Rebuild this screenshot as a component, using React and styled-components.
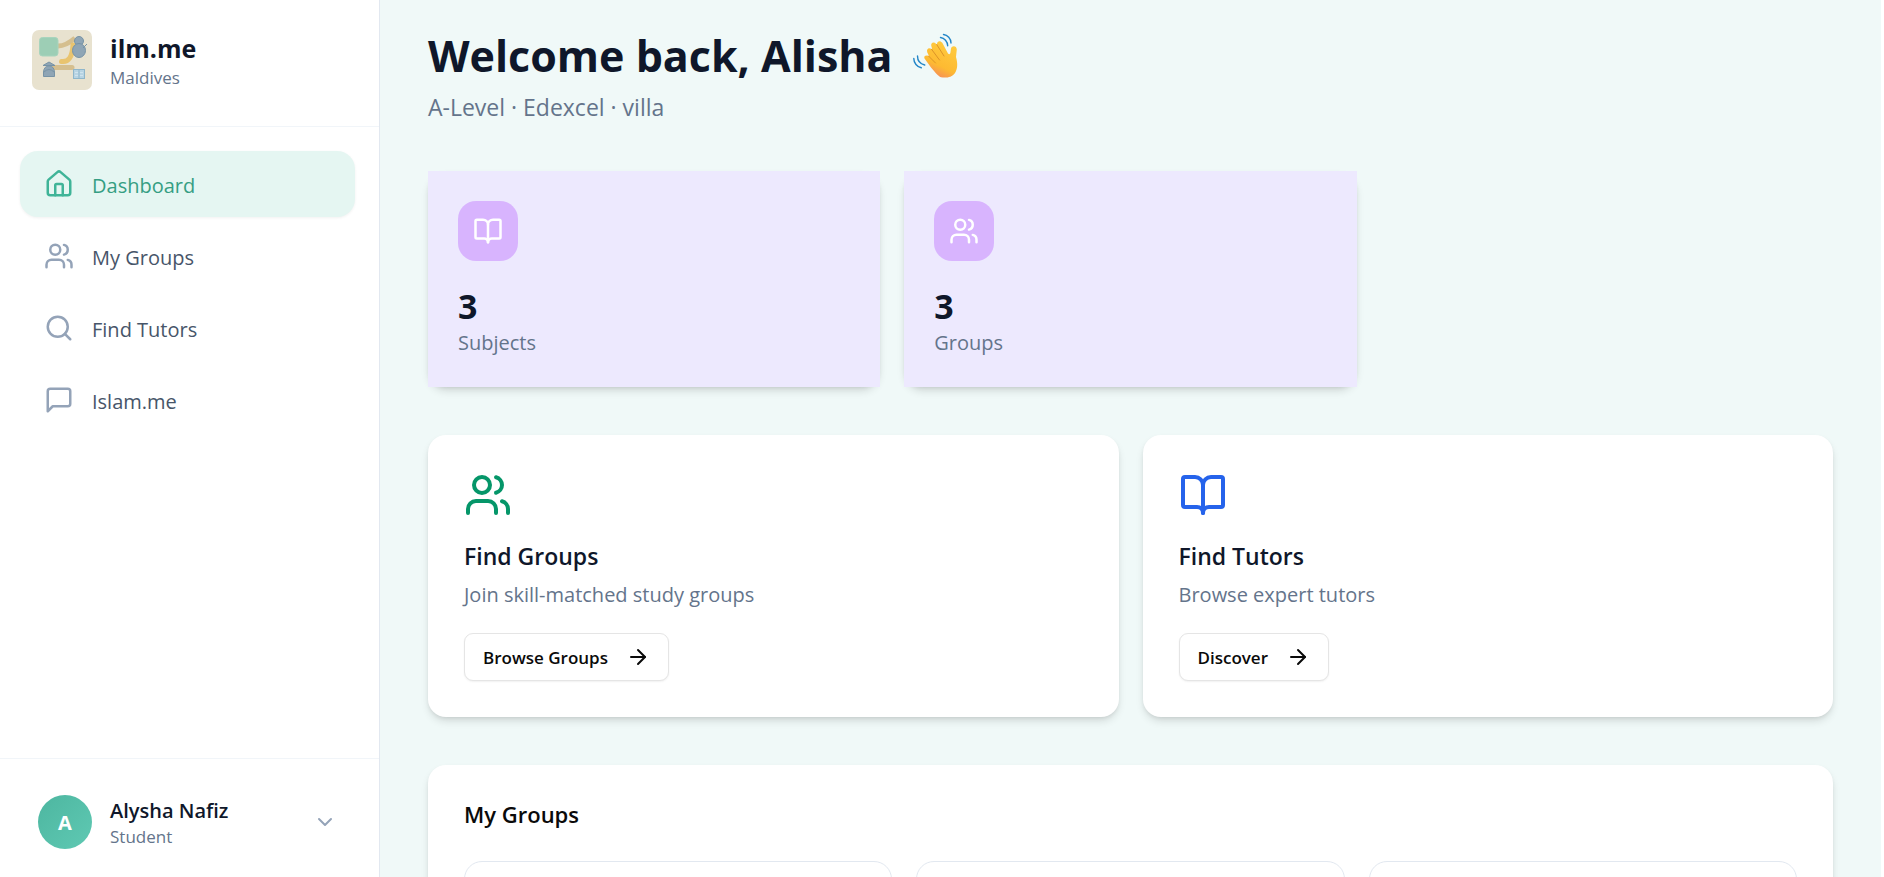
import React from "react";
import styled, { createGlobalStyle } from "styled-components";
import { House, Users, Search, BookOpen, ArrowRight, ChevronDown } from "lucide-react";

const GlobalStyle = createGlobalStyle`
  *, *::before, *::after { box-sizing: border-box; }
  body {
    margin: 0;
    background: #ffffff;
    color: #0f172a;
    font-family: "Segoe UI", "Open Sans", "Noto Sans", sans-serif;
  }
  h1, h2, h3, p { margin: 0; }
  button { font-family: inherit; cursor: pointer; }
`;

const Shell = styled.div`
  display: grid;
  grid-template-columns: 380px 1fr;
  height: 100vh;
  overflow: hidden;
`;

const Sidebar = styled.aside`
  display: flex;
  flex-direction: column;
  background: #ffffff;
  border-right: 1px solid #e2e8f0;
`;

const Brand = styled.div`
  display: flex;
  align-items: flex-start;
  gap: 18px;
  padding: 30px 32px 36px;
  border-bottom: 1px solid #f1f5f9;
`;

const Stack = styled.div`
  display: flex;
  flex-direction: column;
  flex: 1;
  text-align: left;
`;

const BrandName = styled.span`
  font-size: 25px;
  line-height: 36px;
  font-weight: 700;
`;

const Caption = styled.span`
  font-size: 17px;
  line-height: 24px;
  color: #64748b;
`;

const Nav = styled.nav`
  display: flex;
  flex-direction: column;
  flex: 1;
  gap: 6px;
  padding: 24px 24px 24px 20px;
`;

const NavLink = styled.a`
  display: flex;
  align-items: center;
  gap: 18px;
  height: 66px;
  padding: 0 24px;
  border-radius: 18px;
  font-size: 20px;
  font-weight: 500;
  text-decoration: none;
  color: ${(p) => (p.$active ? "#359e83" : "#475569")};
  background: ${(p) => (p.$active ? "#e5f6f2" : "transparent")};
  box-shadow: ${(p) => (p.$active ? "0 1px 3px rgba(0, 0, 0, 0.06)" : "none")};

  svg { color: ${(p) => (p.$active ? "#3fb498" : "#94a3b8")}; }
`;

const NavLabel = styled.span`
  padding-top: 2px;
`;

const ProfileBar = styled.div`
  border-top: 1px solid #f1f5f9;
  padding: 24px 20px 16px;
`;

const ProfileButton = styled.button`
  display: flex;
  align-items: center;
  gap: 18px;
  width: 100%;
  padding: 12px 22px 12px 18px;
  border: 0;
  background: transparent;
  color: inherit;

  svg { color: #94a3b8; }
`;

const Avatar = styled.span`
  display: flex;
  align-items: center;
  justify-content: center;
  width: 54px;
  height: 54px;
  border-radius: 50%;
  background: linear-gradient(135deg, #4db6a0, #5fc9b3);
  color: #ffffff;
  font-size: 20px;
  font-weight: 700;
`;

const ProfileName = styled.span`
  padding-top: 2px;
  font-size: 20px;
  line-height: 28px;
  font-weight: 600;
`;

const Main = styled.main`
  display: flex;
  flex-direction: column;
  gap: 48px;
  padding: 29px 48px 48px;
  border-right: 3px solid #ffffff;
  background: #f0f9f8;
  overflow: hidden;
`;

const Title = styled.h1`
  display: flex;
  align-items: center;
  gap: 20px;
  font-size: 43px;
  line-height: 54px;
  font-weight: 700;
`;

const Subtitle = styled.p`
  padding-top: 8px;
  font-size: 23px;
  line-height: 32px;
  color: #64748b;
`;

const Grid = styled.div`
  display: grid;
  grid-template-columns: repeat(${(p) => p.$columns}, 1fr);
  gap: 24px;
`;

const StatCard = styled.section`
  border-radius: 18px;
  box-shadow: 0 5px 8px -1px rgba(0, 0, 0, 0.12), 0 2px 5px -2px rgba(0, 0, 0, 0.12);
`;

const StatBody = styled.div`
  padding: 30px;
  background: #ede9fe;
`;

const StatIcon = styled.div`
  display: flex;
  align-items: center;
  justify-content: center;
  width: 60px;
  height: 60px;
  border-radius: 18px;
  background: #d8b4fe;
  color: #ffffff;
`;

const StatValue = styled.p`
  padding: 24px 0 2px;
  font-size: 34px;
  line-height: 42px;
  font-weight: 700;
`;

const Muted = styled.p`
  font-size: 20px;
  line-height: 28px;
  color: #64748b;
`;

const Card = styled.section`
  padding: 36px;
  border-radius: 18px;
  background: #ffffff;
  box-shadow: 0 5px 8px -1px rgba(0, 0, 0, 0.12), 0 2px 5px -2px rgba(0, 0, 0, 0.12);
`;

const ActionIcon = styled.div`
  display: flex;
  padding-bottom: 22px;
  color: ${(p) => p.$color};
`;

const CardTitle = styled.h2`
  padding-bottom: 10px;
  font-size: 23px;
  line-height: 30px;
  font-weight: 600;
`;

const GroupsTitle = styled.h2`
  padding-bottom: 34px;
  font-size: 22px;
  line-height: 26px;
  font-weight: 600;
  color: #0a0a0a;
`;

const OutlineButton = styled.button`
  display: inline-flex;
  align-items: center;
  gap: 18px;
  height: 48px;
  margin-top: 24px;
  padding: 0 18px;
  border: 1px solid #e5e5e5;
  border-radius: 9px;
  background: #ffffff;
  box-shadow: 0 1px 2px rgba(0, 0, 0, 0.06);
  color: #0a0a0a;
  font-size: 17px;
  font-weight: 600;
`;

const GroupCard = styled.article`
  height: 180px;
  border: 1px solid #e2e8f0;
  border-radius: 18px;
`;

const Logo = () => (
  <svg width="60" height="60" viewBox="0 0 60 60" aria-hidden="true">
    <rect width="60" height="60" rx="7" fill="#e8e2cf" />
    <path d="M26 16Q34 16 43 8" fill="none" stroke="#d5bf8f" strokeWidth="5" />
    <path d="M22 37.500H40" stroke="#d5bf8f" strokeWidth="5" strokeLinecap="round" />
    <path d="M29.500 31.500Q40 33 41 15" fill="none" stroke="#e9c46f" strokeWidth="5" strokeLinecap="round" />
    <rect x="7.500" y="7.500" width="18.500" height="18.500" rx="3" fill="#9dceb5" stroke="#a8d4bd" />
    <g fill="#8fa5b5" stroke="#7793a6">
      <circle cx="47" cy="11" r="4.500" />
      <ellipse cx="47" cy="20.500" rx="6.500" ry="7" />
      <path d="M51 18L55 14" fill="none" />
      <path d="M11.500 46.500V42Q12 36 17 36Q22 36 22.500 42V46.500Z" />
      <path d="M12 42Q17 37 22 42" fill="none" />
      <path d="M11 35.500L17 32L23 35.500Z" />
    </g>
    <rect x="41.500" y="39.500" width="11" height="9" fill="#b8d4e3" stroke="#8fb6cb" />
    <path d="M47 39V49" stroke="#8fb6cb" />
    <path d="M43 42.500H46M43 45.500H46M48 42.500H51M48 45.500H51" stroke="#cfe3ee" />
  </svg>
);

const Wave = () => (
  <svg width="46" height="46" viewBox="0 0 46 46" role="img" aria-label="Waving hand">
    <defs>
      <linearGradient id="skin" x1="0.75" y1="0.1" x2="0.35" y2="1">
        <stop offset="0" stopColor="#ffca3e" />
        <stop offset="0.65" stopColor="#fdba32" />
        <stop offset="1" stopColor="#f58a5c" />
      </linearGradient>
    </defs>
    <path
      fill="url(#skin)"
      d="M11.500 25.500C10.500 23 13 21.500 15.500 23L15.800 22.500L14.300 19.500C13 16 16 14.200 18.500 16.200L19 15.500L18.300 13C17.500 9.500 20.800 8.300 23 10.700L24 12L24 11C24 8 27.300 7 29.300 9.800L35 20.500C36.500 22 37.300 21 37.500 19L38 15.500C38.800 12 43.800 12.500 43.800 16.500L43 24C45 31 44.500 36 42 40C38.500 44.800 33 45 28 44.300C25 43 21.500 38.500 18 34.500Z"
    />
    <path d="M15.500 23L22.500 30M18.500 16.200L26.500 27M23.700 11.500L31 23" fill="none" stroke="#dc9428" strokeWidth="1" strokeLinecap="round" />
    <g fill="none" stroke="#2386c8" strokeWidth="1.400" strokeLinecap="round">
      <path d="M27.500 4.500C31.500 5 34.500 8.500 34.700 12.800" />
      <path d="M30.500 1.500C34.500 2 38 5.500 38 10" />
      <path d="M4.500 23C4.500 27.500 7.500 31 11.700 32" />
      <path d="M0.800 25.500C0.800 30 4 34 8.300 34.800" />
    </g>
  </svg>
);

const Message = ({ size }) => (
  <svg width={size} height={size} viewBox="0 0 24 24" fill="none" stroke="currentColor" strokeWidth="2" strokeLinecap="round" strokeLinejoin="round" aria-hidden="true">
    <path d="M21 15a2 2 0 0 1-2 2H7l-4 4V5a2 2 0 0 1 2-2h14a2 2 0 0 1 2 2z" />
  </svg>
);

const navItems = [
  { label: "Dashboard", icon: House, active: true },
  { label: "My Groups", icon: Users },
  { label: "Find Tutors", icon: Search },
  { label: "Islam.me", icon: Message },
];

const stats = [
  { label: "Subjects", value: 3, icon: BookOpen },
  { label: "Groups", value: 3, icon: Users },
];

const actions = [
  { title: "Find Groups", text: "Join skill-matched study groups", button: "Browse Groups", icon: Users, color: "#059669" },
  { title: "Find Tutors", text: "Browse expert tutors", button: "Discover", icon: BookOpen, color: "#2563eb" },
];

export default function App() {
  return (
    <>
      <GlobalStyle />
      <Shell>
        <Sidebar>
          <Brand>
            <Logo />
            <Stack>
              <BrandName>ilm.me</BrandName>
              <Caption>Maldives</Caption>
            </Stack>
          </Brand>
          <Nav aria-label="Main">
            {navItems.map(({ label, icon: Icon, active }) => (
              <NavLink key={label} href="#" $active={active} aria-current={active ? "page" : undefined}>
                <Icon size={30} />
                <NavLabel>{label}</NavLabel>
              </NavLink>
            ))}
          </Nav>
          <ProfileBar>
            <ProfileButton type="button">
              <Avatar>A</Avatar>
              <Stack>
                <ProfileName>Alysha Nafiz</ProfileName>
                <Caption>Student</Caption>
              </Stack>
              <ChevronDown size={24} />
            </ProfileButton>
          </ProfileBar>
        </Sidebar>
        <Main>
          <header>
            <Title>
              Welcome back, Alisha
              <Wave />
            </Title>
            <Subtitle>A-Level · Edexcel · villa</Subtitle>
          </header>
          <Grid $columns={3}>
            {stats.map(({ label, value, icon: Icon }) => (
              <StatCard key={label}>
                <StatBody>
                  <StatIcon>
                    <Icon size={30} />
                  </StatIcon>
                  <StatValue>{value}</StatValue>
                  <Muted>{label}</Muted>
                </StatBody>
              </StatCard>
            ))}
          </Grid>
          <Grid $columns={2}>
            {actions.map(({ title, text, button, icon: Icon, color }) => (
              <Card key={title}>
                <ActionIcon $color={color}>
                  <Icon size={48} />
                </ActionIcon>
                <CardTitle>{title}</CardTitle>
                <Muted>{text}</Muted>
                <OutlineButton type="button">
                  {button}
                  <ArrowRight size={24} />
                </OutlineButton>
              </Card>
            ))}
          </Grid>
          <Card>
            <GroupsTitle>My Groups</GroupsTitle>
            <Grid $columns={3}>
              <GroupCard />
              <GroupCard />
              <GroupCard />
            </Grid>
          </Card>
        </Main>
      </Shell>
    </>
  );
}
